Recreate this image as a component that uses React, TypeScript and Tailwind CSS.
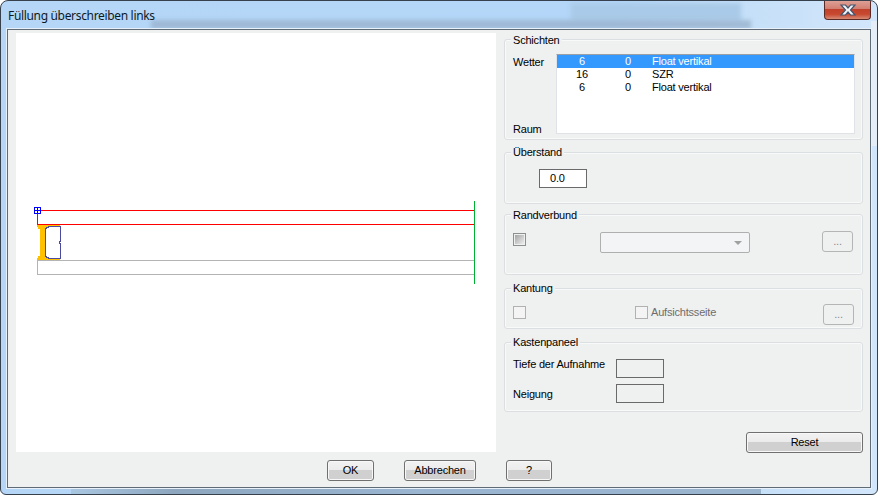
function WinButton({ label, className = '' }: { label: string; className?: string }) {
  return (
    <div
      className={`flex h-[21px] items-center justify-center rounded-[3px] border border-[#707070] bg-[linear-gradient(#f2f2f2_0%,#ebebeb_49%,#d0d0d0_50%,#d0d0d0_100%)] text-[#000] shadow-[inset_0_0_0_1px_#f8f8f8] ${className}`}
    >
      {label}
    </div>
  )
}

function Group({
  title,
  className = '',
  labelClass = '-top-[8px]',
  children,
}: {
  title: string
  className?: string
  labelClass?: string
  children?: React.ReactNode
}) {
  return (
    <div className={`relative rounded-[3px] border border-[#dcdfe1] shadow-[inset_0_0_0_1px_#f8f9f9] ${className}`}>
      <span className={`absolute left-[6px] bg-[#eff0f0] px-[2px] leading-[14px] ${labelClass}`}>{title}</span>
      {children}
    </div>
  )
}

function CheckBox({ filled = false, className = '' }: { filled?: boolean; className?: string }) {
  return (
    <div
      className={`h-[13px] w-[13px] shrink-0 border ${
        filled ? 'border-[#8e8f8f] p-px' : 'border-[#b1b1b1] bg-[#f4f4f4]'
      } ${className}`}
    >
      {filled && <div className="h-full w-full bg-[linear-gradient(135deg,#a4a4a4,#eeeeee)]" />}
    </div>
  )
}

function ListRow({ a, b, c, selected = false }: { a: string; b: string; c: string; selected?: boolean }) {
  return (
    <div className={`flex h-[13px] items-center leading-[13px] ${selected ? 'bg-[#3399ff] text-white' : 'text-black'}`}>
      <span className="w-[50px] text-center">{a}</span>
      <span className="w-[42px] text-center">{b}</span>
      <span className="pl-[3px]">{c}</span>
    </div>
  )
}

function Drawing() {
  return (
    <svg width="480" height="419" viewBox="0 0 480 419" shapeRendering="crispEdges" className="block">
      <rect x="21.5" y="177.5" width="437" height="14" fill="none" stroke="#ff0000" />
      <rect x="21.5" y="227.5" width="437" height="14" fill="none" stroke="#b4b4b4" />
      <line x1="458.5" y1="168" x2="458.5" y2="251" stroke="#00b030" />
      <path
        d="M21 192H44V193H33V194H31V195H30V224H31V225H33V226H44V227H21V225H22V223H24V196H22V194H21Z"
        fill="#ffc000"
      />
      <path
        d="M32.5 193.5H44.5V208.5H43.5V210.5H44.5V225.5H32.5V224.5H30.5V223.5H29.5V195.5H30.5V194.5H32.5Z"
        fill="#ffffff"
        stroke="#4a4aa0"
      />
      <rect x="18.5" y="174.5" width="6" height="6" fill="none" stroke="#0000ff" />
      <line x1="21.5" y1="174" x2="21.5" y2="181" stroke="#0000ff" />
      <line x1="18" y1="177.5" x2="25" y2="177.5" stroke="#0000ff" />
    </svg>
  )
}

export default function App() {
  return (
    <div className="h-[495px] w-[878px] overflow-hidden bg-white font-['Liberation_Sans',Arial,sans-serif] text-[11px] tracking-[-0.2px] text-black">
      <div className="relative flex h-full w-full flex-col overflow-hidden rounded-[8px] rounded-b-[6px] border border-[#36414d] bg-[linear-gradient(90deg,#b5d6f6_0%,#b4d6f8_70%,#c4dff8_84%,#d2e6fb_100%)] px-[6px] pb-[6px]">
        {/* aero glass streaks behind the title */}
        <div className="absolute left-[570px] top-[2px] h-[18px] w-[170px] bg-[#a9cae8] blur-[2px]" />
        <div className="absolute left-[150px] top-[19px] h-[9px] w-[600px] bg-[#99b2cd]/80 blur-[2px]" />
        <div className="absolute right-0 top-[20px] h-[125px] w-[6px] bg-[#e4ecf5]" />
        <div className="absolute bottom-0 left-[70px] h-[6px] w-[690px] bg-[linear-gradient(90deg,#a9c6e0,#8ea7bf_15%,#9ab5d0_50%,#9ab4ce_100%)]" />
        <div className="relative flex h-[28px] shrink-0 items-start justify-between">
          <span className="pl-[1px] pt-[7px] font-['Noto_Sans',sans-serif] text-[12px] leading-[16px] tracking-[-0.33px] text-[#0c1a26]">
            Füllung überschreiben links
          </span>
          <div className="-mt-px flex h-[20px] w-[47px] items-center justify-center rounded-b-[4px] border border-t-0 border-[#5a2a26] bg-[linear-gradient(#e0a49a_0%,#d28072_45%,#c1412c_50%,#c8492f_75%,#d88a76_100%)]">
            <svg width="18" height="14" viewBox="0 0 18 14">
              <path
                d="M2 2H6.5L9 5L11.5 2H16L11.5 7L16 12H11.5L9 9L6.5 12H2L6.5 7Z"
                fill="#f3f6f9"
                stroke="#46566e"
                strokeWidth="1.2"
              />
            </svg>
          </div>
        </div>

        <div className="relative flex h-[459px] flex-col border border-[#5f6b76] bg-[#eff0f0] shadow-[0_0_0_1px_#e8f1fa]">
          <div className="flex h-[423px] items-start gap-[8px] pl-[8px] pt-[3px]">
            <div className="h-[419px] w-[480px] shrink-0 bg-white">
              <Drawing />
            </div>

            <div className="flex w-[359px] flex-col pt-[6px]">
              <Group title="Schichten" className="h-[101px]" labelClass="-top-[7px]">
                <div className="flex pl-[8px] pt-[14px]">
                  <div className="flex h-[82px] w-[43px] shrink-0 flex-col justify-between pt-px leading-[14px]">
                    <span>Wetter</span>
                    <span>Raum</span>
                  </div>
                  <div className="h-[80px] w-[299px] border border-[#dfe3e8] border-t-[#9a9fa6] bg-white">
                    <ListRow a="6" b="0" c="Float vertikal" selected />
                    <ListRow a="16" b="0" c="SZR" />
                    <ListRow a="6" b="0" c="Float vertikal" />
                  </div>
                </div>
              </Group>

              <Group title="Überstand" className="mt-[12px] h-[52px]">
                <div className="pl-[34px] pt-[16px]">
                  <div className="flex h-[19px] w-[48px] items-center border border-[#6a6a6a] bg-white pl-[10px]">0.0</div>
                </div>
              </Group>

              <Group title="Randverbund" className="mt-[10px] h-[61px]" labelClass="-top-[7px]">
                <div className="flex items-start pl-[8px] pt-[17px]">
                  <CheckBox filled className="mt-px" />
                  <div className="ml-[74px] flex h-[21px] w-[150px] items-center justify-end rounded-[2px] border border-[#afafaf] bg-[#f3f4f5] pr-[7px]">
                    <div className="h-0 w-0 border-x-[4px] border-t-[4px] border-x-transparent border-t-[#a0a0a0]" />
                  </div>
                  <WinButton
                    label="..."
                    className="ml-[72px] -mt-px w-[31px] border-[#b5b5b5] bg-none text-[#8a8a8a] shadow-none"
                  />
                </div>
              </Group>

              <Group title="Kantung" className="mt-[13px] h-[41px]">
                <div className="flex items-start pl-[8px] pt-[17px]">
                  <CheckBox />
                  <div className="ml-[109px] flex w-[188px] items-center gap-[3px]">
                    <CheckBox />
                    <span className="leading-[13px] text-[#6d6d6d]">Aufsichtsseite</span>
                  </div>
                  <WinButton
                    label="..."
                    className="-mt-[2px] w-[31px] border-[#b5b5b5] bg-none text-[#8a8a8a] shadow-none"
                  />
                </div>
              </Group>

              <Group title="Kastenpaneel" className="mt-[13px] h-[70px]">
                <div className="flex flex-col gap-[6px] pl-[8px] pt-[16px]">
                  <div className="flex items-start">
                    <span className="-mt-[2px] w-[103px] leading-[14px]">Tiefe der Aufnahme</span>
                    <div className="h-[19px] w-[48px] border border-[#6a6a6a]" />
                  </div>
                  <div className="flex items-center">
                    <span className="w-[103px] leading-[14px]">Neigung</span>
                    <div className="h-[19px] w-[48px] border border-[#6a6a6a]" />
                  </div>
                </div>
              </Group>

              <div className="mt-[20px] flex justify-end">
                <WinButton label="Reset" className="w-[117px]" />
              </div>
            </div>
          </div>

          <div className="mt-[7px] flex justify-start pl-[319px]">
            <WinButton label="OK" className="w-[47px]" />
            <WinButton
              label="Abbrechen"
              className="ml-[30px] w-[72px] border-[#3c7fb1] shadow-[inset_0_0_0_1px_#a6e0f5]"
            />
            <WinButton label="?" className="ml-[30px] w-[46px]" />
          </div>
        </div>
      </div>
    </div>
  )
}
